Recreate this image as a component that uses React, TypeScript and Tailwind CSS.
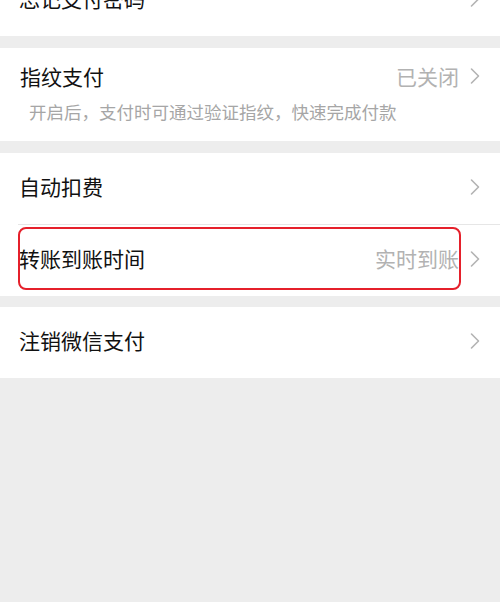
import React from 'react'

const font = { fontFamily: '"Noto Sans CJK SC", "Noto Sans", sans-serif' }

const Chevron = () => (
  <svg width="10" height="18" viewBox="0 0 10 18" className="shrink-0">
    <path d="M1.5 2 L8.5 9 L1.5 16" fill="none" stroke="#b3b3b3" strokeWidth="1.6" strokeLinecap="round" strokeLinejoin="round" />
  </svg>
)

type RowProps = {
  title: string
  value?: string
  className?: string
  children?: React.ReactNode
}

const Row = ({ title, value, className = '', children }: RowProps) => (
  <div className={`relative flex items-center h-[71px] pl-[19px] pr-[20px] pb-[4px] bg-white ${className}`}>
    <p className="flex-1 text-[21px] text-[#111] leading-none">{title}</p>
    {value && <p className="text-[21px] text-[#b2b2b2] leading-none mr-[11px]">{value}</p>}
    <Chevron />
    {children}
  </div>
)

export default function App() {
  return (
    <div style={font} className="w-[500px] h-[602px] overflow-hidden bg-[#ededed]">
      {/* forgot password row, scrolled partly out of view */}
      <div className="-mt-[35px]">
        <Row title="忘记支付密码" className="pb-0" />
      </div>

      <div className="mt-[12px] bg-white h-[93px] pl-[20px] pr-[20px] pt-[15px]">
        <div className="flex items-center">
          <p className="flex-1 text-[21px] text-[#111] leading-[26px]">指纹支付</p>
          <p className="text-[21px] text-[#b2b2b2] leading-[26px] mr-[11px]">已关闭</p>
          <Chevron />
        </div>
        <p className="mt-[12px] pl-[9px] text-[17.5px] text-[#a6a6a6] leading-[22px]">开启后，支付时可通过验证指纹，快速完成付款</p>
      </div>

      <div className="mt-[12px] bg-white">
        <Row title="自动扣费" />
        <div className="ml-[18px] h-px bg-[#e6e6e6]" />
        <Row title="转账到账时间" value="实时到账">
          <div className="absolute left-[18px] top-[2px] w-[443px] h-[63px] rounded-[8px] border-2 border-[#e5202b] pointer-events-none" />
        </Row>
      </div>

      <div className="mt-[11px]">
        <Row title="注销微信支付" />
      </div>
    </div>
  )
}
